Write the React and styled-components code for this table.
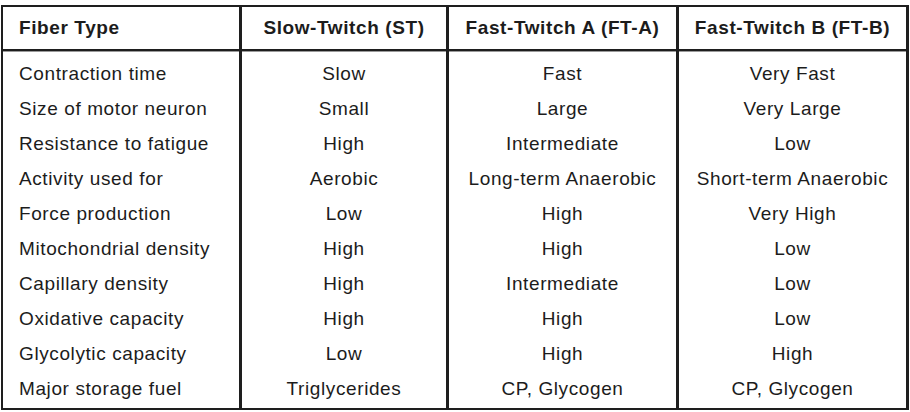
import React from "react";
import styled, { createGlobalStyle } from "styled-components";

const Global = createGlobalStyle`
  html, body { margin: 0; padding: 0; background: #ffffff; }
  body { font-family: "Liberation Sans", Arial, Helvetica, sans-serif; color: #1c1c1c; }
`;

const Table = styled.div`
  display: grid;
  grid-template-columns: 239px 207px 230px 227px;
  width: max-content;
  margin: 5px 0 0 1px;
  border-top: 2px solid #1e1e1e;
  border-left: 2px solid #1e1e1e;
  border-right: 3px solid #1e1e1e;
  border-bottom: 2px solid #1e1e1e;
  box-shadow: 0 1px 0 #9a9a9a;
`;

const HeadCell = styled.div`
  display: flex;
  align-items: center;
  justify-content: ${(p) => (p.$left ? "flex-start" : "center")};
  padding-left: ${(p) => (p.$left ? "16px" : "0")};
  height: 42px;
  font-size: 19px;
  font-weight: bold;
  letter-spacing: 0.6px;
  border-bottom: 2px solid #1e1e1e;
  box-shadow: 0 1px 0 #9a9a9a;
  border-right: ${(p) => (p.$last ? "none" : "3px solid #1e1e1e")};
  white-space: nowrap;
`;

const Cell = styled.div`
  display: flex;
  align-items: center;
  justify-content: ${(p) => (p.$left ? "flex-start" : "center")};
  padding-left: ${(p) => (p.$left ? "16px" : "0")};
  padding-top: ${(p) => (p.$first ? "5px" : "0")};
  padding-bottom: ${(p) => (p.$end ? "2px" : "0")};
  height: 35px;
  font-size: 19px;
  letter-spacing: 0.6px;
  border-right: ${(p) => (p.$last ? "none" : "3px solid #1e1e1e")};
  white-space: nowrap;
`;

const headers = ["Fiber Type", "Slow-Twitch (ST)", "Fast-Twitch A (FT-A)", "Fast-Twitch B (FT-B)"];

const rows = [
  ["Contraction time", "Slow", "Fast", "Very Fast"],
  ["Size of motor neuron", "Small", "Large", "Very Large"],
  ["Resistance to fatigue", "High", "Intermediate", "Low"],
  ["Activity used for", "Aerobic", "Long-term Anaerobic", "Short-term Anaerobic"],
  ["Force production", "Low", "High", "Very High"],
  ["Mitochondrial density", "High", "High", "Low"],
  ["Capillary density", "High", "Intermediate", "Low"],
  ["Oxidative capacity", "High", "High", "Low"],
  ["Glycolytic capacity", "Low", "High", "High"],
  ["Major storage fuel", "Triglycerides", "CP, Glycogen", "CP, Glycogen"],
];

export default function App() {
  return (
    <>
      <Global />
      <Table>
        {headers.map((h, i) => (
          <HeadCell key={h} $left={i === 0} $last={i === 3}>
            {h}
          </HeadCell>
        ))}
        {rows.map((r, ri) =>
          r.map((c, ci) => (
            <Cell
              key={`${ri}-${ci}`}
              $left={ci === 0}
              $last={ci === 3}
              $first={ri === 0}
              $end={ri === rows.length - 1}
            >
              {c}
            </Cell>
          ))
        )}
      </Table>
    </>
  );
}
